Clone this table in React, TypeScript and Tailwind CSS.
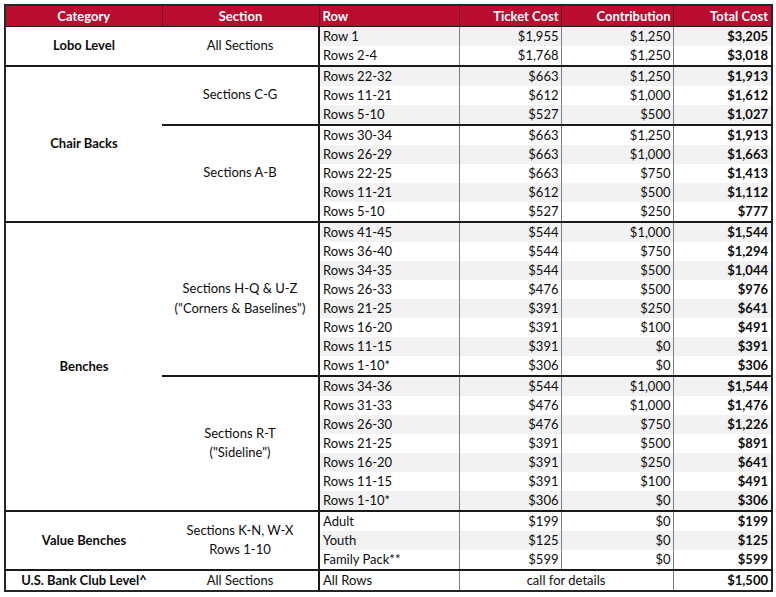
import React from "react";

type Row = [string, string, string, string];

type Section = { name: string[]; rows: Row[] };

type Group = { category: string; sections: Section[] };

const groups: Group[] = [
  {
    category: "Lobo Level",
    sections: [
      {
        name: ["All Sections"],
        rows: [
          ["Row 1", "$1,955", "$1,250", "$3,205"],
          ["Rows 2-4", "$1,768", "$1,250", "$3,018"],
        ],
      },
    ],
  },
  {
    category: "Chair Backs",
    sections: [
      {
        name: ["Sections C-G"],
        rows: [
          ["Rows 22-32", "$663", "$1,250", "$1,913"],
          ["Rows 11-21", "$612", "$1,000", "$1,612"],
          ["Rows 5-10", "$527", "$500", "$1,027"],
        ],
      },
      {
        name: ["Sections A-B"],
        rows: [
          ["Rows 30-34", "$663", "$1,250", "$1,913"],
          ["Rows 26-29", "$663", "$1,000", "$1,663"],
          ["Rows 22-25", "$663", "$750", "$1,413"],
          ["Rows 11-21", "$612", "$500", "$1,112"],
          ["Rows 5-10", "$527", "$250", "$777"],
        ],
      },
    ],
  },
  {
    category: "Benches",
    sections: [
      {
        name: ["Sections H-Q & U-Z", '("Corners & Baselines")'],
        rows: [
          ["Rows 41-45", "$544", "$1,000", "$1,544"],
          ["Rows 36-40", "$544", "$750", "$1,294"],
          ["Rows 34-35", "$544", "$500", "$1,044"],
          ["Rows 26-33", "$476", "$500", "$976"],
          ["Rows 21-25", "$391", "$250", "$641"],
          ["Rows 16-20", "$391", "$100", "$491"],
          ["Rows 11-15", "$391", "$0", "$391"],
          ["Rows 1-10*", "$306", "$0", "$306"],
        ],
      },
      {
        name: ["Sections R-T", '("Sideline")'],
        rows: [
          ["Rows 34-36", "$544", "$1,000", "$1,544"],
          ["Rows 31-33", "$476", "$1,000", "$1,476"],
          ["Rows 26-30", "$476", "$750", "$1,226"],
          ["Rows 21-25", "$391", "$500", "$891"],
          ["Rows 16-20", "$391", "$250", "$641"],
          ["Rows 11-15", "$391", "$100", "$491"],
          ["Rows 1-10*", "$306", "$0", "$306"],
        ],
      },
    ],
  },
  {
    category: "Value Benches",
    sections: [
      {
        name: ["Sections K-N, W-X", "Rows 1-10"],
        rows: [
          ["Adult", "$199", "$0", "$199"],
          ["Youth", "$125", "$0", "$125"],
          ["Family Pack**", "$599", "$0", "$599"],
        ],
      },
    ],
  },
];

const grid = "border-[#7f7f7f]";
const rule = "border-t-2 border-t-[#1a1a1a]";

export default function App() {
  let index = 0;
  const body: React.ReactNode[] = [];

  groups.forEach((group, gi) => {
    const groupSize = group.sections.reduce((n, s) => n + s.rows.length, 0);
    group.sections.forEach((section, si) => {
      section.rows.forEach((row, ri) => {
        const stripe = index % 2 === 0 ? "bg-[#f2f2f2]" : "bg-white";
        const groupTop = gi > 0 && si === 0 && ri === 0;
        const sectionTop = ri === 0 && (gi > 0 || si > 0);
        const top = sectionTop ? rule : "";
        index++;
        body.push(
          <tr key={`${gi}-${si}-${ri}`} className="h-[19px]">
            {si === 0 && ri === 0 && (
              <td rowSpan={groupSize} className={`text-center font-bold ${groupTop ? rule : ""}`}>
                {group.category}
              </td>
            )}
            {ri === 0 && (
              <td
                rowSpan={section.rows.length}
                className={`text-center leading-[19.5px] border-r-2 border-r-[#1a1a1a] ${top}`}
              >
                {section.name.map((line) => (
                  <div key={line}>{line}</div>
                ))}
              </td>
            )}
            <td className={`pl-[3px] border-r ${grid} ${stripe} ${top}`}>{row[0]}</td>
            <td className={`text-right pr-[2px] border-r ${grid} ${stripe} ${top}`}>{row[1]}</td>
            <td className={`text-right pr-[2px] border-r ${grid} ${stripe} ${top}`}>{row[2]}</td>
            <td className={`text-right pr-[3px] font-bold ${stripe} ${top}`}>{row[3]}</td>
          </tr>
        );
      });
    });
  });

  return (
    <div className="w-[776px] h-[597px] bg-white pt-[4px] pl-[4px] font-[Lato,'Liberation_Sans',sans-serif] text-[13px] leading-[19px] text-[#0d0d0d]">
      <table className="table-fixed border-collapse w-[767px] border-2 border-[#262626]">
        <colgroup>
          <col className="w-[157px]" />
          <col className="w-[157px]" />
          <col className="w-[140px]" />
          <col className="w-[102px]" />
          <col className="w-[112px]" />
          <col className="w-[99px]" />
        </colgroup>
        <thead>
          <tr className="h-[21px] bg-[#ba0c2f] text-white font-bold leading-[18px]">
            <th className="text-center border-r border-[#6d1020] border-b border-b-[#1a1a1a]">Category</th>
            <th className="text-center border-r border-[#6d1020] border-b border-b-[#1a1a1a]">Section</th>
            <th className="text-left pl-[3px] border-r border-[#6d1020] border-b border-b-[#1a1a1a]">Row</th>
            <th className="text-right pr-[2px] border-r border-[#6d1020] border-b border-b-[#1a1a1a]">Ticket Cost</th>
            <th className="text-right pr-[2px] border-r border-[#6d1020] border-b border-b-[#1a1a1a]">Contribution</th>
            <th className="text-right pr-[3px] border-b border-b-[#1a1a1a]">Total Cost</th>
          </tr>
        </thead>
        <tbody>
          {body}
          <tr className="h-[19px]">
            <td className={`text-center font-bold ${rule}`}>U.S. Bank Club Level^</td>
            <td className={`text-center border-r-2 border-r-[#1a1a1a] ${rule}`}>All Sections</td>
            <td className={`pl-[3px] border-r ${grid} ${rule}`}>All Rows</td>
            <td colSpan={2} className={`text-center border-r ${grid} ${rule}`}>
              call for details
            </td>
            <td className={`text-right pr-[3px] font-bold ${rule}`}>$1,500</td>
          </tr>
        </tbody>
      </table>
    </div>
  );
}
